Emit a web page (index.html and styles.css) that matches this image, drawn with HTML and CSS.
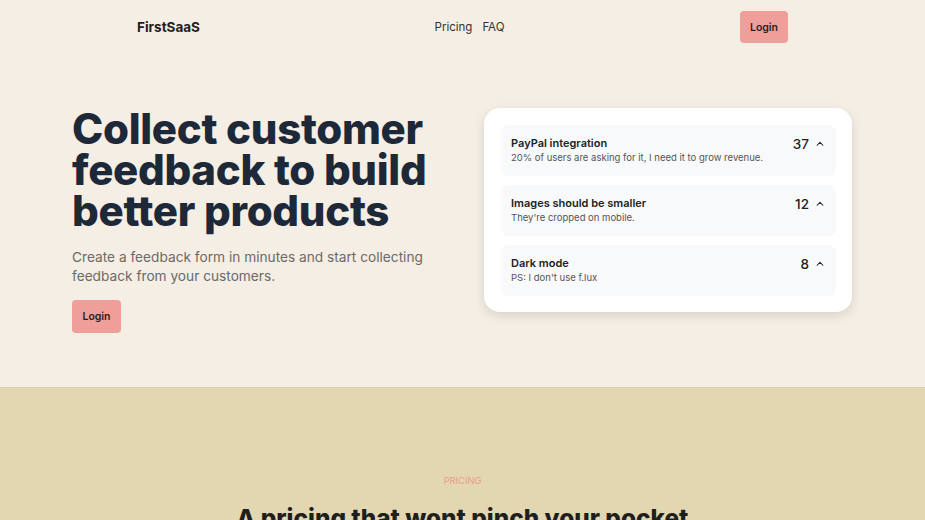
FILE: index.html
```html
<!DOCTYPE html>
<html lang="en">
<head>
    <meta charset="UTF-8">
    <meta name="viewport" content="width=device-width, initial-scale=1.0">
    <title>FirstSaaS</title>
    <link rel="stylesheet" href="styles.css">
</head>
<body>
    <header class="navbar">
        <a class="brand" href="#">FirstSaaS</a>
        <nav class="nav-links">
            <a href="#pricing">Pricing</a>
            <a href="#faq">FAQ</a>
        </nav>
        <div class="nav-end">
            <button class="btn">Login</button>
        </div>
    </header>

    <section class="hero">
        <div class="hero-text">
            <h1>Collect customer feedback to build better products</h1>
            <p>Create a feedback form in minutes and start collecting feedback from your customers.</p>
            <button class="btn btn-hero">Login</button>
        </div>

        <div class="feedback-card">
            <div class="feedback-item">
                <div class="feedback-info">
                    <h3>PayPal integration</h3>
                    <p>20% of users are asking for it, I need it to grow revenue.</p>
                </div>
                <div class="votes">
                    <span>37</span>
                    <svg viewBox="0 0 24 24" width="10" height="10"><path d="M5 15l7-7 7 7" fill="none" stroke="currentColor" stroke-width="2.5" stroke-linecap="round" stroke-linejoin="round"/></svg>
                </div>
            </div>
            <div class="feedback-item">
                <div class="feedback-info">
                    <h3>Images should be smaller</h3>
                    <p>They're cropped on mobile.</p>
                </div>
                <div class="votes">
                    <span>12</span>
                    <svg viewBox="0 0 24 24" width="10" height="10"><path d="M5 15l7-7 7 7" fill="none" stroke="currentColor" stroke-width="2.5" stroke-linecap="round" stroke-linejoin="round"/></svg>
                </div>
            </div>
            <div class="feedback-item">
                <div class="feedback-info">
                    <h3>Dark mode</h3>
                    <p>PS: I don't use f.lux</p>
                </div>
                <div class="votes">
                    <span>8</span>
                    <svg viewBox="0 0 24 24" width="10" height="10"><path d="M5 15l7-7 7 7" fill="none" stroke="currentColor" stroke-width="2.5" stroke-linecap="round" stroke-linejoin="round"/></svg>
                </div>
            </div>
        </div>
    </section>

    <section class="pricing" id="pricing">
        <p class="eyebrow">PRICING</p>
        <h2>A pricing that wont pinch your pocket</h2>
    </section>
</body>
</html>
```

FILE: styles.css
```css
body {
    font-family: 'Inter', 'Noto Sans', sans-serif;
    background-color: #f5eee4;
    color: #1f1f1f;
    margin: 0;
    padding: 0;
}
a {
    color: inherit;
    text-decoration: none;
}
.navbar {
    display: flex;
    align-items: center;
    height: 54px;
    padding: 0 137px;
}
.brand {
    flex: 1;
    font-size: 13.5px;
    font-weight: 700;
    color: #1f1f1f;
}
.nav-links {
    display: flex;
    gap: 10px;
    margin-left: 14px;
    font-size: 11.5px;
    color: #333;
}
.nav-end {
    flex: 1;
    display: flex;
    justify-content: flex-end;
}
.btn {
    font-family: inherit;
    font-size: 10.5px;
    font-weight: 600;
    color: #2b1e1e;
    background-color: #ef9e99;
    border: none;
    border-radius: 4px;
    width: 48px;
    height: 32px;
    cursor: pointer;
}
.hero {
    display: flex;
    justify-content: space-between;
    align-items: flex-start;
    padding: 54px 73px 54px 72px;
    height: 225px;
}
.hero-text {
    width: 380px;
}
.hero h1 {
    font-size: 42px;
    font-weight: 800;
    line-height: 41px;
    letter-spacing: -0.3px;
    color: #1d2939;
    margin: 0;
}
.hero-text p {
    font-size: 13.7px;
    line-height: 19px;
    color: #6b6a68;
    margin: 17px 0 14px;
}
.btn-hero {
    width: 49px;
    height: 33px;
}
.feedback-card {
    width: 335px;
    background: #fff;
    border-radius: 16px;
    padding: 17px 16px 16px 17px;
    display: flex;
    flex-direction: column;
    gap: 9px;
    box-shadow: 0 4px 12px rgba(0, 0, 0, 0.12);
}
.feedback-item {
    display: flex;
    justify-content: space-between;
    align-items: flex-start;
    background: #f8f9fb;
    border-radius: 8px;
    height: 51px;
    box-sizing: border-box;
    padding: 11px 11px 0 10px;
}
.feedback-item h3 {
    font-size: 11px;
    font-weight: 600;
    margin: 0 0 2px;
    color: #222;
}
.feedback-item p {
    font-size: 9.5px;
    color: #555;
    margin: 0;
}
.votes {
    display: flex;
    align-items: center;
    gap: 6px;
    font-size: 13.5px;
    font-weight: 500;
    color: #222;
}
.pricing {
    background-color: #e3d7b1;
    padding: 87px 0 0;
    text-align: center;
    height: 200px;
    border-top: 1px solid #ddd2b6;
}
.eyebrow {
    font-size: 9.3px;
    color: #eb9a90;
    margin: 0;
}
.pricing h2 {
    font-size: 24.4px;
    font-weight: 800;
    color: #1f1f1f;
    margin: 17px 0 0;
}
```
